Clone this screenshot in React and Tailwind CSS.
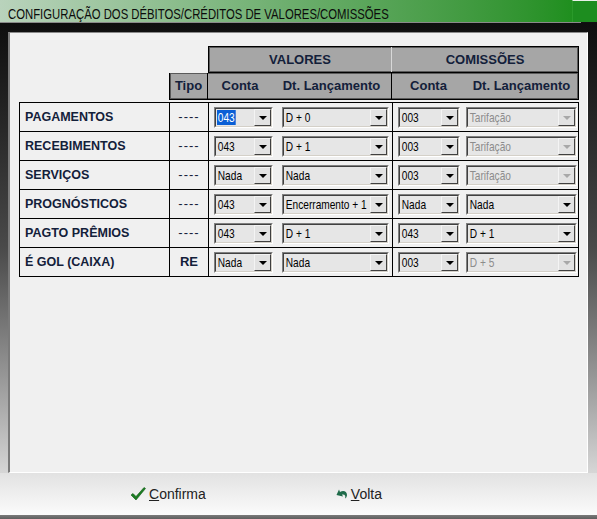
import React from 'react';

const rows = [
  { label: 'PAGAMENTOS', tipo: '----', vc: '043', vd: 'D + 0', cc: '003', cd: 'Tarifação', cdOff: true, sel: true },
  { label: 'RECEBIMENTOS', tipo: '----', vc: '043', vd: 'D + 1', cc: '003', cd: 'Tarifação', cdOff: true },
  { label: 'SERVIÇOS', tipo: '----', vc: 'Nada', vd: 'Nada', cc: '003', cd: 'Tarifação', cdOff: true },
  { label: 'PROGNÓSTICOS', tipo: '----', vc: '043', vd: 'Encerramento + 1', cc: 'Nada', cd: 'Nada' },
  { label: 'PAGTO PRÊMIOS', tipo: '----', vc: '043', vd: 'D + 1', cc: '043', cd: 'D + 1' },
  { label: 'É GOL (CAIXA)', tipo: 'RE', vc: 'Nada', vd: 'Nada', cc: '003', cd: 'D + 5', cdOff: true },
];

function Combo({ value, w, disabled, selected }) {
  return (
    <div className={`flex h-[21px] ${w} border border-t-[#808080] border-l-[#808080] border-r-white border-b-white`}>
      <div className="flex flex-1 min-w-0 border border-t-[#404040] border-l-[#404040] border-r-[#d4d0c8] border-b-[#d4d0c8] bg-[#e6e6e6]">
        <div className="flex flex-1 min-w-0 items-center pl-[1px] whitespace-nowrap">
          <span
            className={`inline-block origin-left scale-x-[0.78] text-[13px] leading-[15px] px-[1px] ${
              selected ? 'bg-[#0a5fd6] text-white' : disabled ? 'text-[#8c8c8c]' : 'text-black'
            }`}
          >
            {value}
          </span>
        </div>
        <div className="relative w-[17px] h-full border border-t-[#f4f4f4] border-l-[#f4f4f4] border-r-[#404040] border-b-[#404040] bg-[#e2e2e2] flex items-center justify-center">
          <div
            className={`w-0 h-0 mt-[1px] border-l-[4px] border-r-[4px] border-t-[4px] border-l-transparent border-r-transparent ${
              disabled ? 'border-t-[#a8a8a8]' : 'border-t-black'
            }`}
          />
        </div>
      </div>
    </div>
  );
}

function CheckIcon() {
  return (
    <svg width="16" height="14" viewBox="0 0 16 14">
      <path d="M1 8 L3 6.5 L6 9.5 L14 0.5 L15.5 1.5 L6 13 Z" fill="#1b7d22" stroke="#0f5a14" strokeWidth="0.6" />
    </svg>
  );
}

function UndoIcon() {
  return (
    <svg width="12" height="10" viewBox="0 0 12 10">
      <path d="M4 3 C7 1 11 2 11 6 C11 7.5 10 9 9 9.5 C10 7 9 5 6 5.5 L7 7.5 L0.5 6 L3 0.5 Z" fill="#1f6b4a" />
    </svg>
  );
}

export default function App() {
  const hdr = "font-bold text-[13px] text-[#13203a]";
  const lbl = "font-bold text-[12.5px] text-[#13203a]";
  return (
    <div className="w-[597px] h-[519px] flex flex-col overflow-hidden bg-[#111] font-['Liberation_Sans',Arial,sans-serif]">
      {/* title */}
      <div className="h-[22px] flex bg-gradient-to-r from-[#b9d3bc] via-[#6aad6b] to-[#128c12]">
        <div className="flex-1 pl-[8px] pt-[2px] overflow-hidden whitespace-nowrap">
          <span className="inline-block origin-left scale-x-[0.755] text-[15px] leading-[18px] text-[#0c0c0c]">
            CONFIGURAÇÃO DOS DÉBITOS/CRÉDITOS DE VALORES/COMISSÕES
          </span>
        </div>
        <div className="w-[25px] h-full bg-[#1d8d1f] border-t border-l border-t-[#e8f0e8] border-l-[#2a9a2a]" />
      </div>
      <div className="h-[1px] bg-[#8a8a8a] mr-[16px]" />

      {/* body */}
      <div className="h-[450px] flex bg-gradient-to-b from-[#0e0e0e] via-[#4a4a4a] to-[#d6d6d6] pt-[9px]">
        <div className="w-[8px]" />
        <div className="w-[580px] h-[441px] bg-[#f0f0f0] border-l-2 border-t border-l-[#7a7a7a] border-t-[#8a8a8a] border-r border-b border-r-white border-b-white pl-[9px] pt-[13px]">
          {/* header row 1 */}
          <div className="flex">
            <div className="w-[189px]" />
            <div className="w-[371px] h-[27px] flex border border-black bg-[#a6a6a6] shadow-[inset_0_0_0_1px_#5a5a5a]">
              <div className={`${hdr} w-[183px] flex items-center justify-center border-r border-r-[#d8d8d8]`}>VALORES</div>
              <div className={`${hdr} flex-1 flex items-center justify-center`}>COMISSÕES</div>
            </div>
          </div>
          {/* header row 2 */}
          <div className="flex">
            <div className="w-[150px]" />
            <div className="w-[410px] h-[27px] flex border border-black border-t-0 bg-[#a6a6a6] shadow-[inset_0_0_0_1px_#5a5a5a]">
              <div className={`${hdr} w-[38px] flex items-center justify-center border-r border-r-black`}>Tipo</div>
              <div className={`${hdr} w-[64px] flex items-center justify-center`}>Conta</div>
              <div className={`${hdr} w-[120px] flex items-center justify-center border-r border-r-black`}>Dt. Lançamento</div>
              <div className={`${hdr} w-[73px] flex items-center justify-center`}>Conta</div>
              <div className={`${hdr} flex-1 flex items-center justify-center`}>Dt. Lançamento</div>
            </div>
          </div>

          {/* data rows */}
          <div className="mt-[2px] w-[560px] border border-black border-b-0">
            {rows.map((r) => (
              <div key={r.label} className="flex h-[29px] border-b border-black">
                <div className={`${lbl} w-[150px] pl-[5px] flex items-center border-r border-black`}>{r.label}</div>
                <div
                  className={`w-[39px] flex items-center justify-center border-r border-black text-[13px] text-[#13203a] ${
                    r.tipo === 'RE' ? 'font-bold' : 'tracking-[1px]'
                  }`}
                >
                  {r.tipo}
                </div>
                <div className="w-[184px] flex items-center pl-[5px] gap-[9px] border-r border-black">
                  <Combo value={r.vc} w="w-[59px]" selected={r.sel} />
                  <Combo value={r.vd} w="w-[107px]" />
                </div>
                <div className="flex-1 flex items-center pl-[5px] gap-[6px]">
                  <Combo value={r.cc} w="w-[62px]" />
                  <Combo value={r.cd} w="w-[111px]" disabled={r.cdOff} />
                </div>
              </div>
            ))}
          </div>
        </div>
        <div className="w-[9px]" />
      </div>

      {/* footer */}
      <div className="h-[42px] flex items-center bg-gradient-to-b from-[#e2e2e2] to-[#fbfbfb] text-[14px] text-[#222]">
        <div className="w-[130px]" />
        <div className="flex items-center gap-[3px]">
          <CheckIcon />
          <span>
            <span className="underline">C</span>onfirma
          </span>
        </div>
        <div className="w-[130px]" />
        <div className="flex items-center gap-[3px]">
          <UndoIcon />
          <span>
            <span className="underline">V</span>olta
          </span>
        </div>
      </div>
      <div className="h-[4px] bg-gradient-to-b from-[#7a7a7a] to-[#5e5e5e]" />
    </div>
  );
}
